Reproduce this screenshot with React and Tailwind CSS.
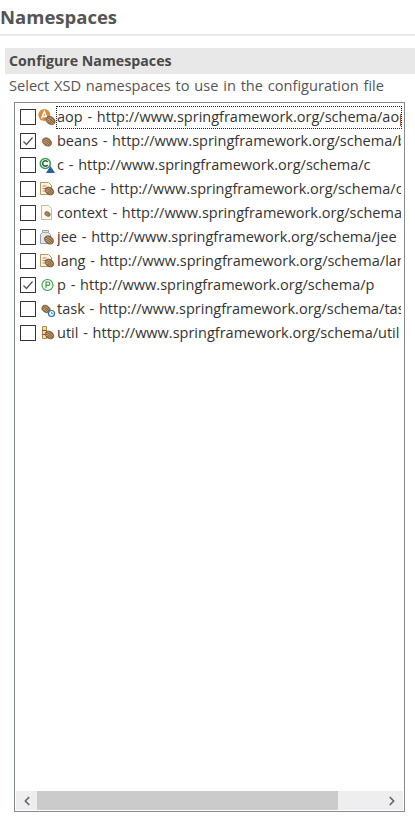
import React from 'react';
import { ChevronLeft, ChevronRight } from 'lucide-react';

// bean runs from upper left to lower right in the eclipse icons
const Bean = ({ x = 9, y = 10, s = 1 }) => (
  <g transform={`translate(${x} ${y}) rotate(35) scale(${s})`}>
    <ellipse rx="5" ry="3.8" fill="#8c6239" stroke="#6b4a2a" strokeWidth="0.5" />
    <path d="M-3.5 -1.4 Q0 -2.6 3.5 -1.4M-4 0.6 Q0 -0.6 4 0.6M-3.2 2.2 Q0 1.2 3.2 2.2" stroke="#d8bb95" strokeWidth="0.7" fill="none" />
  </g>
);

const Doc = ({ tint = '#b8975a' }) => (
  <>
    <path d="M2.5 2.5h8l3 3v9h-11z" fill="#fbf6e6" stroke={tint} />
    <path d="M4.5 6h4M4.5 8.5h5M4.5 11h3" stroke="#c66a4a" strokeWidth="0.9" />
  </>
);

const icons = {
  aop: (
    <>
      <circle cx="6.3" cy="7" r="6" fill="#dd8a3c" />
      <path d="M3.5 10.5 6.3 3.5l2.8 7M4.5 8.5h3.6" stroke="#fff" strokeWidth="1.4" fill="none" />
      <Bean x={12.5} y={12.5} />
    </>
  ),
  beans: <Bean x={9} y={10} />,
  c: (
    <>
      <circle cx="7.3" cy="7.5" r="5" fill="#fff" stroke="#3d9a50" strokeWidth="1.6" />
      <path d="M9.6 6a2.7 2.7 0 1 0 0 3" stroke="#24603a" strokeWidth="1.5" fill="none" />
      <path d="M12.5 10l4.5 7H8z" fill="#2a5ca8" />
    </>
  ),
  cache: (
    <>
      <Doc />
      <Bean x={11.5} y={11} s={0.95} />
    </>
  ),
  context: (
    <>
      <path d="M3.5 1.5h7l3 3v11h-10z" fill="#fbf8ee" stroke="#c9bd8e" />
      <Bean x={9.5} y={10} s={0.6} />
    </>
  ),
  jee: (
    <>
      <path d="M4.5 2.5h6v2l2 2v9h-10v-9l2-2z" fill="#dfe7f2" stroke="#8d9db4" />
      <path d="M4.5 4.5h6" stroke="#c9a46a" />
      <Bean x={11} y={12} />
    </>
  ),
  lang: (
    <>
      <Doc />
      <Bean x={11.5} y={11} s={0.95} />
    </>
  ),
  p: (
    <>
      <circle cx="9.5" cy="9" r="5.5" fill="#f4fbf2" stroke="#3b9a4c" strokeWidth="1.1" />
      <path d="M8 12v-6h2.2a1.6 1.6 0 0 1 0 3.4H8" stroke="#3b9a4c" strokeWidth="1.1" fill="none" />
    </>
  ),
  task: (
    <>
      <Bean x={8} y={9} s={0.9} />
      <circle cx="13.5" cy="13.5" r="3" fill="#fff" stroke="#1f6fc4" strokeWidth="1.2" />
      <path d="M13.5 12v1.6h1.4" stroke="#1f6fc4" strokeWidth="0.8" fill="none" />
    </>
  ),
  util: (
    <>
      <path d="M4.5 2.5h4v12h-4z" fill="#f3e2a6" stroke="#a58b45" />
      <path d="M4.5 6.5h4M4.5 10.5h4" stroke="#a23c2c" />
      <Bean x={11.5} y={11} s={0.95} />
    </>
  ),
};

const rows = [
  { name: 'aop', url: 'http://www.springframework.org/schema/aop', focus: true },
  { name: 'beans', url: 'http://www.springframework.org/schema/beans', checked: true },
  { name: 'c', url: 'http://www.springframework.org/schema/c' },
  { name: 'cache', url: 'http://www.springframework.org/schema/cache' },
  { name: 'context', url: 'http://www.springframework.org/schema/context' },
  { name: 'jee', url: 'http://www.springframework.org/schema/jee' },
  { name: 'lang', url: 'http://www.springframework.org/schema/lang' },
  { name: 'p', url: 'http://www.springframework.org/schema/p', checked: true },
  { name: 'task', url: 'http://www.springframework.org/schema/task' },
  { name: 'util', url: 'http://www.springframework.org/schema/util' },
];

const Row = ({ row }) => (
  <div className="flex h-6 items-center">
    <div className="ml-1 flex h-[16px] w-[16px] shrink-0 items-center justify-center border border-[#333333] bg-white">
      {row.checked && (
        <svg width="14" height="14" viewBox="0 0 14 14">
          <path d="M2.5 7.5 5.5 10.5 11.5 3.5" stroke="#555555" strokeWidth="1.3" fill="none" />
        </svg>
      )}
    </div>
    <svg width="18" height="18" viewBox="0 0 18 18" className="ml-[2px] shrink-0">
      {icons[row.name]}
    </svg>
    <div
      className={`flex h-[23px] min-w-0 flex-1 items-center overflow-hidden whitespace-nowrap border border-dotted pb-px text-[14.5px] leading-5 [word-spacing:1px] ${
        row.focus ? 'border-[#222222]' : 'border-transparent'
      }`}
    >
      {row.name} - {row.url}
    </div>
  </div>
);

export default function App() {
  return (
    <div className="flex h-[817px] w-[415px] flex-col overflow-hidden bg-white font-['Open_Sans','Noto_Sans',sans-serif] text-[#333333]">
      <div className="flex h-[36px] items-center border-b-2 border-[#e9e9e9]">
        <h1 className="text-[18.5px] font-bold text-[#555555]">Namespaces</h1>
      </div>
      <div className="ml-[5px] mt-3 flex h-[26px] items-center bg-[#e8e8e8] pl-1">
        <h2 className="text-[14.2px] font-bold text-[#4a4a4a]">Configure Namespaces</h2>
      </div>
      <p className="ml-[9px] flex h-[22px] items-center pb-px text-[14.6px] leading-5 text-[#555555] [word-spacing:1px]">
        Select XSD namespaces to use in the configuration file
      </p>
      <div className="mb-[5px] ml-[14px] mr-[10px] mt-[6px] flex flex-1 flex-col border border-[#868a91] p-px">
        <div className="flex-1 overflow-hidden pr-px pt-px">
          {rows.map((row) => (
            <Row key={row.name} row={row} />
          ))}
        </div>
        <div className="flex h-[19px] items-center bg-[#eeeeee]">
          <div className="flex w-[21px] justify-center text-[#666666]">
            <ChevronLeft size={14} strokeWidth={3} />
          </div>
          <div className="h-full w-[301px] bg-[#cbcbcb]" />
          <div className="flex flex-1 justify-end pr-[4px] text-[#666666]">
            <ChevronRight size={14} strokeWidth={3} />
          </div>
        </div>
      </div>
    </div>
  );
}
